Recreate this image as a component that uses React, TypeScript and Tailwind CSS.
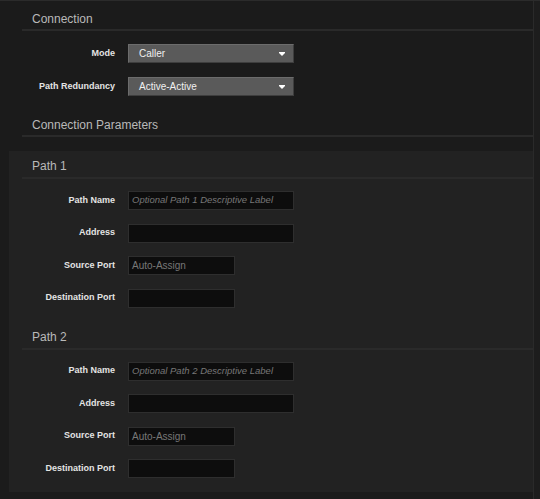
import React from 'react';

const font = { fontFamily: '"Liberation Sans", Arial, sans-serif' };

function Heading({ title, top }: { title: string; top: string }) {
	return (
		<div
			className={`${top} pb-[2px] ml-[22px] text-[12px] leading-[15px] text-[#b9b9b9] border-b-2 border-[#2a2a2a]`}
		>
			<span className="pl-[10px]">{title}</span>
		</div>
	);
}

function Select({ value }: { value: string }) {
	return (
		<div className="w-[166px] h-[19px] bg-[#5a5a5a] border border-[#6c6c6c] border-b-[#3e3e3e] border-r-[#3e3e3e] flex items-center justify-between pl-[10px] pr-[8px] text-[10px] text-[#f0f0f0]">
			<span>{value}</span>
			<svg width="6" height="4" viewBox="0 0 6 4">
				<rect x="0" y="0" width="6" height="1" fill="#ffffff" />
				<polygon points="0,1 6,1 3,4" fill="#ffffff" />
			</svg>
		</div>
	);
}

function Input({ wide, placeholder, italic }: { wide?: boolean; placeholder?: string; italic?: boolean }) {
	return (
		<div
			className={`${wide ? 'w-[166px]' : 'w-[107px]'} h-[19px] bg-[#0d0d0d] border border-[#2e2e2e] flex items-center pl-[3px] text-[#777777] ${italic ? 'italic text-[9.5px]' : 'text-[10px]'}`}
		>
			{placeholder}
		</div>
	);
}

function Row({ label, labelW, children }: { label: string; labelW: string; children: React.ReactNode }) {
	return (
		<div className="flex items-center h-[19px]">
			<div className={`${labelW} text-right text-[9px] font-bold text-[#e4e4e4]`}>{label}</div>
			<div className="ml-[13px]">{children}</div>
		</div>
	);
}

function PathPanel({ n, top }: { n: number; top: string }) {
	return (
		<>
			<div
				className={`${top} pb-[3px] ml-[13px] text-[12px] leading-[15px] text-[#b9b9b9] border-b-2 border-[#2a2a2a]`}
			>
				<span className="pl-[10px]">Path {n}</span>
			</div>
			<div className="mt-[12px] flex flex-col gap-[13.5px]">
				<Row label="Path Name" labelW="w-[106px]">
					<Input wide italic placeholder={`Optional Path ${n} Descriptive Label`} />
				</Row>
				<Row label="Address" labelW="w-[106px]">
					<Input wide />
				</Row>
				<Row label="Source Port" labelW="w-[106px]">
					<Input placeholder="Auto-Assign" />
				</Row>
				<Row label="Destination Port" labelW="w-[106px]">
					<Input />
				</Row>
			</div>
		</>
	);
}

export default function App() {
	return (
		<div style={font} className="w-[540px] h-[499px] bg-[#1b1b1b] border-t border-[#2b2b2b] flex overflow-hidden">
			<div className="w-[533px] flex flex-col">
				<Heading title="Connection" top="pt-[11px]" />
				<div className="mt-[13px] flex flex-col gap-[14px]">
					<Row label="Mode" labelW="w-[115px]">
						<Select value="Caller" />
					</Row>
					<Row label="Path Redundancy" labelW="w-[115px]">
						<Select value="Active-Active" />
					</Row>
				</div>
				<Heading title="Connection Parameters" top="mt-[10px] pt-[12px]" />
				<div className="mt-[14px] ml-[9px] bg-[#222222] pt-[8px] pb-[14px]">
					<PathPanel n={1} top="" />
					<PathPanel n={2} top="mt-[14px] pt-[8px]" />
				</div>
			</div>
			<div className="flex-1 border-l border-[#2a2a2a] bg-[#1d1d1d]" />
		</div>
	);
}
